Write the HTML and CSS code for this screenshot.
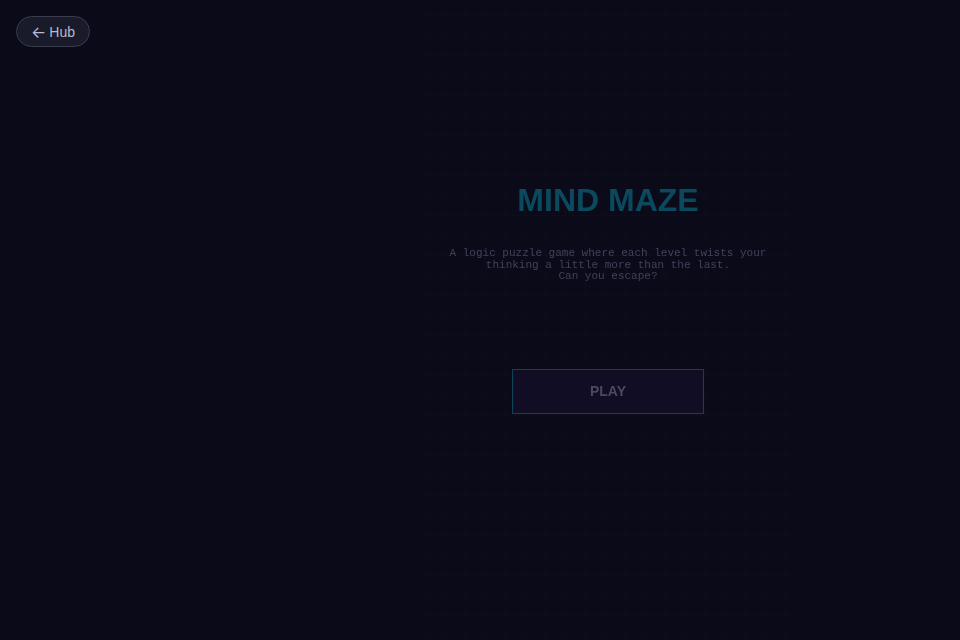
FILE: index.html
```html
<!DOCTYPE html>
<html lang="en">
<head>
<meta charset="utf-8">
<title>Mind Maze</title>
<link rel="stylesheet" href="styles.css">
</head>
<body>
<a class="hub" href="#"><span class="arrow">←</span> Hub</a>
<div class="stage">
  <main class="panel">
    <h1 class="title">MIND MAZE</h1>
    <p class="desc">A logic puzzle game where each level twists your<br>thinking a little more than the last.<br>Can you escape?</p>
    <button class="play">PLAY</button>
  </main>
</div>
</body>
</html>
```
FILE: styles.css
```css
html, body {
  margin: 0;
  height: 100%;
  background: #0a0a19;
}
body {
  font-family: "Liberation Sans", Arial, sans-serif;
  overflow: hidden;
}
.hub {
  position: absolute;
  left: 16px;
  top: 16px;
  box-sizing: border-box;
  width: 74px;
  height: 31px;
  display: flex;
  align-items: center;
  justify-content: center;
  gap: 3px;
  border: 1px solid #3a3b4c;
  border-radius: 16px;
  background: #1a1b2a;
  color: #b4bcd3;
  font-size: 14px;
  text-decoration: none;
}
.arrow {
  font-family: Inter, "DejaVu Sans", sans-serif;
  font-size: 16px;
  line-height: 14px;
}
.stage {
  height: 100%;
  display: flex;
  justify-content: center;
  padding-left: 256px;
}
.panel {
  width: 450px;
  height: 100%;
  display: flex;
  flex-direction: column;
  align-items: center;
  background-image:
    linear-gradient(to right, rgba(70, 70, 130, 0.05) 1px, transparent 1px),
    linear-gradient(to bottom, rgba(70, 70, 130, 0.05) 1px, transparent 1px);
  background-size: 20px 20px;
  background-position: 2px 15px;
  -webkit-mask-image: linear-gradient(to right, transparent 0, #000 50px, #000 400px, transparent 450px);
  mask-image: linear-gradient(to right, transparent 0, #000 50px, #000 400px, transparent 450px);
}
.title {
  margin: 182px 0 0;
  font-size: 32px;
  line-height: 36px;
  font-weight: bold;
  color: #0b4a5e;
}
.desc {
  margin: 30px 0 0;
  font-family: "Liberation Mono", "Courier New", monospace;
  font-size: 11px;
  line-height: 11.5px;
  color: #42425a;
  text-align: center;
}
.play {
  margin-top: 86px;
  width: 192px;
  height: 45px;
  background: #100d24;
  border: 1px solid #0e4556;
  color: #4a4960;
  font-family: "Liberation Sans", Arial, sans-serif;
  font-weight: bold;
  font-size: 14px;
  cursor: pointer;
}
```
